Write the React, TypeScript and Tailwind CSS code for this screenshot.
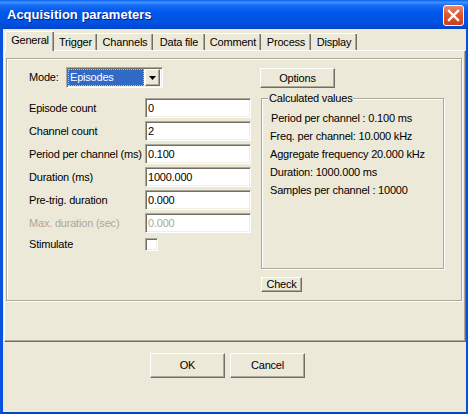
import React from 'react';

const tabs = [
  { label: 'General', w: 'w-[49px]', active: true },
  { label: 'Trigger', w: 'w-[43px]' },
  { label: 'Channels', w: 'w-[56px]' },
  { label: 'Data file', w: 'w-[52px]' },
  { label: 'Comment', w: 'w-[56px]' },
  { label: 'Process', w: 'w-[50px]' },
  { label: 'Display', w: 'w-[46px]' },
];

const fields = [
  { label: 'Episode count', value: '0' },
  { label: 'Channel count', value: '2' },
  { label: 'Period per channel (ms)', value: '0.100' },
  { label: 'Duration (ms)', value: '1000.000' },
  { label: 'Pre-trig. duration', value: '0.000' },
  { label: 'Max. duration (sec)', value: '0.000', disabled: true },
];

const calculated = [
  'Period per channel : 0.100 ms',
  'Freq. per channel: 10.000 kHz',
  'Aggregate frequency 20.000 kHz',
  'Duration: 1000.000 ms',
  'Samples per channel : 10000',
];

const sunken =
  'border border-t-[#aca899] border-l-[#aca899] border-r-white border-b-white shadow-[inset_1px_1px_0_#716f64,inset_-1px_-1px_0_#f1efe2]';
const raised =
  'border border-t-white border-l-white border-r-[#716f64] border-b-[#716f64] shadow-[inset_-1px_-1px_0_#aca899] bg-[#ECE9D8]';

const TitleBar = () => (
  <div className="h-[29px] shrink-0 flex items-center justify-between pl-[7px] pr-[4px] bg-[linear-gradient(180deg,#0a5ff0_0%,#3d95ff_8%,#1a6cf5_18%,#0058ee_40%,#0054e3_70%,#004cd9_90%,#0041c4_100%)]">
    <span className="text-white font-bold text-[13px] tracking-[0px] leading-none [text-shadow:1px_1px_0_#0a1e8c]">
      Acquisition parameters
    </span>
    <div className="w-[21px] h-[21px] mt-[1px] rounded-[3px] border border-white bg-[linear-gradient(180deg,#e88a6c_0%,#e0562e_45%,#c8401c_100%)] flex items-center justify-center">
      <svg width="13" height="13" viewBox="0 0 13 13">
        <path d="M2 2 L11 11 M11 2 L2 11" stroke="white" strokeWidth="2.4" strokeLinecap="square" />
      </svg>
    </div>
  </div>
);

const Tab = ({ label, w, active }: { label: string; w: string; active?: boolean }) =>
  active ? (
    <div
      className={`${w} h-[20px] relative z-10 bg-[#ECE9D8] border-l border-t border-white rounded-tl-[2px] shadow-[inset_-1px_0_0_#716f64,inset_-2px_0_0_#aca899] flex items-start justify-center pt-[2px] leading-[13px]`}
    >
      {label}
    </div>
  ) : (
    <div
      className={`${w} h-[17px] mb-[1px] bg-[#ECE9D8] border-t border-white rounded-tl-[2px] shadow-[inset_-1px_0_0_#716f64,inset_-2px_0_0_#aca899] flex items-start justify-center pt-[2px] leading-[13px]`}
    >
      {label}
    </div>
  );

const Combo = () => (
  <div className={`w-[97px] h-[21px] bg-white ${sunken} flex items-center pl-[1px] pr-[2px]`}>
    <div className="w-[76px] h-[17px] bg-[#316ac5] text-white outline-1 outline-dotted outline-[#d8c470] -outline-offset-1 flex items-center pl-[2px] leading-none">
      Episodes
    </div>
    <div className={`ml-auto w-[15px] h-[17px] ${raised} flex items-center justify-center`}>
      <svg width="7" height="4" viewBox="0 0 7 4">
        <polygon points="0,0 7,0 3.5,4" fill="black" />
      </svg>
    </div>
  </div>
);

const Button = ({ label, className }: { label: string; className: string }) => (
  <div className={`${raised} ${className} flex items-center justify-center leading-none`}>{label}</div>
);

export default function App() {
  return (
    <div className="w-[468px] h-[414px] flex flex-col bg-[#0054e3] font-['Liberation_Sans',Arial,sans-serif] text-[11px] tracking-[-0.2px] text-black select-none">
      <TitleBar />
      <div className="flex-1 flex flex-col bg-[#ECE9D8] border-l-[3px] border-r-[2px] border-b-[2px] border-l-[#0b52e0] border-r-[#0a4fdc] border-b-[#0842c8]">
        {/* tab strip */}
        <div className="mt-[2px] h-[20px] -mb-[1px] pl-[2px] flex items-end">
          {tabs.map((t) => (
            <Tab key={t.label} {...t} />
          ))}
        </div>

        {/* tab panel */}
        <div className="ml-[1px] h-[292px] border-l border-t border-white border-r border-b border-r-[#716f64] border-b-[#716f64] shadow-[inset_-1px_-1px_0_#aca899] pt-[7px] pl-[1px]">
          <div className="w-[456px] h-[243px] border border-[#aca899] shadow-[inset_1px_1px_0_white,1px_1px_0_white] flex pl-[22px]">
            {/* left column */}
            <div className="w-[222px] flex flex-col">
              <div className="mt-[8px] flex items-center">
                <span className="w-[37px]">Mode:</span>
                <Combo />
              </div>
              <div className="mt-[10px] flex flex-col gap-[3px]">
                {fields.map((f) => (
                  <div key={f.label} className="flex items-center h-[20px]">
                    <span className={`w-[116px] ${f.disabled ? 'text-[#aca899]' : ''}`}>{f.label}</span>
                    <div
                      className={`w-[106px] h-[20px] bg-white ${sunken} flex items-center pl-[2px] leading-none ${
                        f.disabled ? 'text-[#aca899]' : ''
                      }`}
                    >
                      {f.value}
                    </div>
                  </div>
                ))}
              </div>
              <div className="mt-[5px] flex items-center h-[13px]">
                <span className="w-[116px]">Stimulate</span>
                <div className={`w-[13px] h-[13px] bg-white ${sunken}`} />
              </div>
            </div>

            {/* right column */}
            <div className="ml-[9px] flex flex-col">
              <Button label="Options" className="mt-[9px] w-[75px] h-[20px]" />
              <div className="relative mt-[10px] ml-[1px] w-[183px] h-[171px] border border-[#aca899] shadow-[inset_1px_1px_0_white,1px_1px_0_white] pt-[10px] pl-[8px]">
                <span className="absolute left-[6px] top-[-7px] px-[1px] bg-[#ECE9D8] leading-[13px]">
                  Calculated values
                </span>
                {calculated.map((line, i) => (
                  <div key={line} className={`leading-[18px] ${i === 0 ? 'pl-[1px]' : ''}`}>
                    {line}
                  </div>
                ))}
              </div>
              <Button label="Check" className="mt-[8px] ml-[1px] w-[41px] h-[15px]" />
            </div>
          </div>
        </div>

        {/* dialog buttons */}
        <div className="mt-[11px] pl-[147px] flex gap-[5px]">
          <Button label="OK" className="w-[75px] h-[25px]" />
          <Button label="Cancel" className="w-[75px] h-[25px]" />
        </div>
      </div>
    </div>
  );
}
